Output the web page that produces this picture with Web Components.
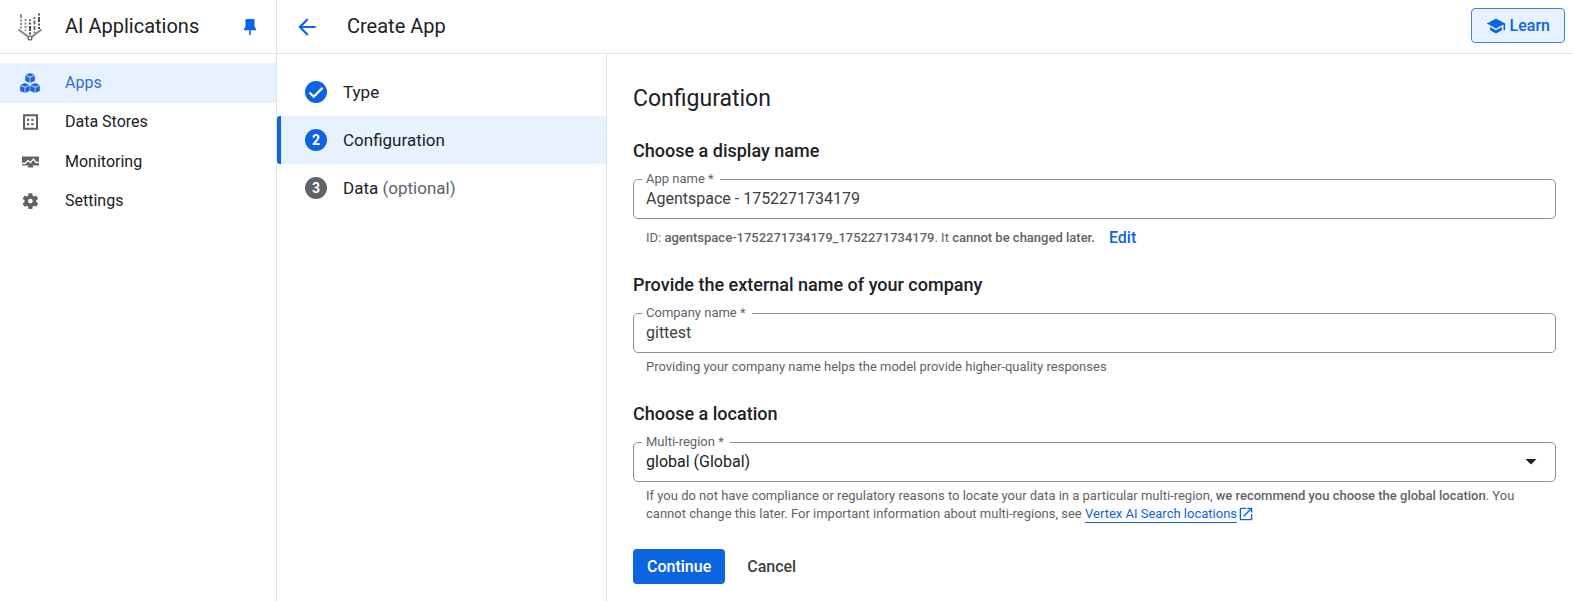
<!DOCTYPE html>
<html lang="en">
<head>
<meta charset="utf-8">
<title>Create App – AI Applications</title>
<style>
  :root {
    --blue: #0b65e3;
    --blue-tint: #e8f1fe;
    --ink: #202124;
    --ink-soft: #3c4043;
    --grey: #5f6368;
    --rule: #dfe1e5;
    --outline: #8a9096;
  }
  body { margin: 0; font: 16px/24px Roboto, sans-serif; color: var(--ink); background: #fff; }
</style>
</head>
<body>
<app-shell>
  <product-bar slot="brand">AI Applications</product-bar>
  <side-nav slot="nav">
    <nav-item icon="apps" active>Apps</nav-item>
    <nav-item icon="data">Data Stores</nav-item>
    <nav-item icon="monitor">Monitoring</nav-item>
    <nav-item icon="settings">Settings</nav-item>
  </side-nav>
  <page-bar slot="bar">Create App</page-bar>
  <step-list slot="steps">
    <step-item state="done">Type</step-item>
    <step-item state="current" number="2">Configuration</step-item>
    <step-item number="3" note="(optional)">Data</step-item>
  </step-list>
  <config-form></config-form>
</app-shell>

<script>
const CUBE = `<path d="M10 .3l4 1.600L10 3.600 6 1.900z"/><path d="M5.400 3l4 1.700v4.700L5.400 7.700zM14.600 3l-4 1.700v4.700l4-1.700z"/>`;
const ICONS = {
  logo: `<svg width="26" height="30" viewBox="0 0 26 30" fill="none">
    <g stroke="#80868b" stroke-width="1.8">
      <path d="M4 2v4" /><path d="M4 7.500v2M4 11v2M4 14.500v2"/>
      <path d="M8.500 7v2M8.500 10.500v2M8.500 14v2M8.500 17.500v1.500"/>
      <path d="M17.500 5v2M17.500 8.500v4M17.500 14v4M17.500 19.500v1.500" stroke="#5f6368"/>
    </g>
    <g stroke="#4d5156" stroke-width="2"><path d="M13 7.500v1.500M13 10.500v2M13 14v5M13 20.500v2"/><path d="M22 1.500v2M22 5v5M22 11.500v2M22 15v2"/></g>
    <path d="M1.500 17.500l10 7.500M24.500 17.500l-10 7.500" stroke="#80868b" stroke-width="2"/>
    <circle cx="13" cy="26" r="1.900" stroke="#5f6368" stroke-width="1.300" fill="#fff"/></svg>`,
  pin: `<svg width="14" height="18" viewBox="0 0 14 18" fill="currentColor"><path d="M3.300 1h7.400a.8.8 0 0 1 .8.8V8.500l1.500 2.500v1.300H7.800V17H6.200v-4.700H1V11l1.500-2.500V1.800a.8.8 0 0 1 .8-.8z"/></svg>`,
  apps: `<svg width="20" height="20" viewBox="0 0 20 20" fill="#1b66d8" stroke="#1b66d8" stroke-width=".5" stroke-linejoin="round">
    <g>${CUBE}</g><g transform="translate(-5.100 10)">${CUBE}</g><g transform="translate(5.100 10)">${CUBE}</g></svg>`,
  data: `<svg width="20" height="20" viewBox="0 0 20 20"><path d="M4 3.200h13v13.600H4z" fill="none" stroke="#5f6368" stroke-width="2"/><path d="M7 6.800h2.200V9H7zM11.300 6.800h2.200V9h-2.200zM7 11h2.200v2.200H7zM11.300 11h2.200v2.200h-2.200z" fill="#5f6368"/></svg>`,
  monitor: `<svg width="20" height="20" viewBox="0 0 20 20"><path d="M2 4.500h17v9h-6.500l1 2h-6l1-2H2z" fill="#5f6368"/><path d="M2 11.500h3l3-3 2.500 2 3-3.500 2.500 3.500h3" fill="none" stroke="#fff" stroke-width="1.300"/></svg>`,
  settings: `<svg width="20" height="20" viewBox="1.500 2 21 20" fill="#5f6368"><path d="M19.140 12.940c.04-.3.060-.61.060-.94 0-.32-.02-.64-.07-.94l2.030-1.580c.18-.14.23-.41.12-.61l-1.920-3.320c-.12-.22-.37-.29-.59-.22l-2.390.96c-.5-.38-1.030-.7-1.620-.94l-.36-2.540c-.04-.24-.24-.41-.48-.41h-3.840c-.24 0-.43.17-.47.41l-.36 2.540c-.59.24-1.130.57-1.620.94l-2.390-.96c-.22-.08-.47 0-.59.22L2.740 8.870c-.12.21-.08.47.12.61l2.030 1.580c-.05.3-.09.63-.09.94s.02.64.07.94l-2.030 1.580c-.18.14-.23.41-.12.61l1.920 3.320c.12.22.37.29.59.22l2.390-.96c.5.38 1.030.7 1.620.94l.36 2.540c.05.24.24.41.48.41h3.840c.24 0 .44-.17.47-.41l.36-2.540c.59-.24 1.130-.56 1.620-.94l2.390.96c.22.08.47 0 .59-.22l1.920-3.320c.12-.22.070-.47-.12-.61l-2.010-1.580zM12 14.800a2.800 2.800 0 1 1 0-5.600 2.800 2.800 0 0 1 0 5.600z" transform="translate(2.100 1.800) scale(.86)"/></svg>`,
  back: `<svg width="26" height="26" viewBox="0 0 24 24" fill="currentColor"><path d="M20 11H7.830l5.590-5.590L12 4l-8 8 8 8 1.410-1.410L7.830 13H20v-2z"/></svg>`,
  school: `<svg width="20" height="20" viewBox="0 0 24 24" fill="currentColor"><path d="M5 13.180v4L12 21l7-3.820v-4L12 17l-7-3.820zM12 3L1 9l11 6 9-4.910V17h2V9L12 3z"/></svg>`,
  check: `<svg width="22" height="22" viewBox="0 0 22 22" fill="none"><path d="M4.500 11.500l4.200 4.200 8.800-8.800" stroke="#fff" stroke-width="2.200"/></svg>`,
  caret: `<svg width="12" height="6" viewBox="0 0 12 6"><path d="M0.500 0h11L6 5.600z" fill="#202124"/></svg>`,
  external: `<svg width="14" height="14" viewBox="2 2 20 20" fill="currentColor"><path d="M19 19H5V5h7V3H5a2 2 0 0 0-2 2v14a2 2 0 0 0 2 2h14c1.100 0 2-.9 2-2v-7h-2v7zM14 3v2h3.590l-9.830 9.830 1.410 1.410L19 6.410V10h2V3h-7z"/></svg>`
};

/* Base class: renders css() and html() into an open shadow root. */
class View extends HTMLElement {
  connectedCallback() {
    if (this.shadowRoot) return;
    this.attachShadow({ mode: 'open' }).innerHTML =
      `<style>*{box-sizing:border-box} svg{display:block;flex:none} ${this.css()}</style>${this.html()}`;
  }
}

customElements.define('app-shell', class extends View {
  css() { return `
    :host { display: grid; grid-template-columns: 277px 1fr; min-height: 100vh; }
    .side { border-right: 1px solid var(--rule); }
    .page { display: flex; flex-direction: column; min-width: 0; }
    .body { flex: 1; display: grid; grid-template-columns: 330px 1fr; }
    .steps { border-right: 1px solid var(--rule); }
    main { min-width: 0; }`; }
  html() { return `
    <aside class="side"><slot name="brand"></slot><slot name="nav"></slot></aside>
    <div class="page"><slot name="bar"></slot>
      <div class="body"><div class="steps"><slot name="steps"></slot></div><main><slot></slot></main></div>
    </div>`; }
});

customElements.define('product-bar', class extends View {
  css() { return `
    :host { display: flex; align-items: center; height: 54px; padding: 0 19px 0 17px; border-bottom: 1px solid var(--rule); box-sizing: border-box; }
    .name { flex: 1; margin: 0 0 2px 22px; font-size: 20px; }
    button { border: 0; padding: 0; background: none; color: var(--blue); }`; }
  html() { return `${ICONS.logo}<span class="name"><slot></slot></span><button aria-label="Unpin menu">${ICONS.pin}</button>`; }
});

customElements.define('side-nav', class extends View {
  css() { return `
    :host { display: block; padding-top: 9px; }
    nav { display: grid; grid-auto-rows: 1fr; height: 158px; }`; }
  html() { return `<nav><slot></slot></nav>`; }
});

customElements.define('nav-item', class extends View {
  css() { return `
    :host { display: grid; }
    :host([active]) { background: var(--blue-tint); }
    a { display: flex; align-items: center; gap: 25px; padding-left: 20px; color: var(--ink); text-decoration: none; }
    :host([active]) a { color: #2a6edb; }`; }
  html() { return `<a href="#">${ICONS[this.getAttribute('icon')]}<span><slot></slot></span></a>`; }
});

customElements.define('page-bar', class extends View {
  css() { return `
    :host { display: flex; align-items: center; height: 54px; padding: 0 8px 0 17px; border-bottom: 1px solid var(--rule); box-sizing: border-box; }
    h1 { flex: 1; margin: 0 0 2px 27px; font-size: 20px; font-weight: 400; }
    button { font: inherit; color: var(--blue); background: none; border: 0; padding: 0; }
    .learn { display: flex; align-items: center; gap: 4px; height: 35px; padding: 0 14px; margin-bottom: 2px; border: 1px solid #3b82ea; border-radius: 4px; background: var(--blue-tint); font-weight: 500; }`; }
  html() { return `<button aria-label="Back">${ICONS.back}</button><h1><slot></slot></h1><button class="learn">${ICONS.school}<span>Learn</span></button>`; }
});

customElements.define('step-list', class extends View {
  css() { return `:host { display: block; padding-top: 14px; }`; }
  html() { return `<slot></slot>`; }
});

customElements.define('step-item', class extends View {
  css() { return `
    :host { display: flex; align-items: center; gap: 16px; height: 48px; padding-left: 24px; border-left: 4px solid transparent; font-size: 17px; box-sizing: border-box; }
    :host([state=current]) { border-color: var(--blue); border-radius: 3px 0 0 3px; background: var(--blue-tint); }
    .dot { display: grid; place-items: center; width: 22px; height: 22px; border-radius: 50%; background: var(--grey); color: #fff; font-size: 14px; font-weight: 700; line-height: 22px; }
    :host([state]) .dot { background: var(--blue); }
    .note { color: var(--grey); }`; }
  html() {
    const note = this.getAttribute('note');
    return `<span class="dot">${this.getAttribute('number') || ICONS.check}</span>
      <span><slot></slot>${note ? ` <span class="note">${note}</span>` : ''}</span>`;
  }
});

/* Outlined field with its label set in the notch of the border. */
customElements.define('outlined-field', class extends View {
  css() { return `
    :host { display: block; }
    fieldset { height: 48px; margin: 0; padding: 0; border: 1px solid var(--outline); border-radius: 5px; min-width: 0; }
    legend { display: block; margin-left: 8px; padding: 0 6px 0 4px; height: 16px; font-size: 13px; line-height: 16px; color: var(--grey); }
    .box { display: grid; align-items: center; height: 24px; }
    .box > * { grid-area: 1 / 1; }
    input, select { appearance: none; width: 100%; height: 24px; padding: 0 12px; border: 0; outline: 0; background: none; font: inherit; color: var(--ink-soft); }
    select { color: var(--ink); }
    svg { justify-self: end; margin-right: 18px; pointer-events: none; }`; }
  html() {
    const value = this.getAttribute('value');
    const control = this.hasAttribute('menu')
      ? `<select id="f"><option>${value}</option></select>${ICONS.caret}`
      : `<input id="f" type="text" value="${value}">`;
    return `<fieldset><legend><label for="f">${this.getAttribute('label')} *</label></legend><div class="box">${control}</div></fieldset>`;
  }
});

customElements.define('form-section', class extends View {
  css() { return `
    :host { display: block; }
    h3 { margin: 0 0 8px; font-size: 18px; font-weight: 500; line-height: 24px; }
    .hint { padding: 0 13px; margin-top: 5px; font-size: 13px; line-height: 18px; color: var(--grey); }
    :host([roomy]) .hint { margin-top: 10px; }`; }
  html() { return `<h3>${this.getAttribute('heading')}</h3><slot name="field"></slot><div class="hint"><slot></slot></div>`; }
});

customElements.define('config-form', class extends View {
  css() { return `
    :host { display: block; padding: 31px 17px 16px 26px; }
    h2 { margin: 0 0 26px; font-size: 23px; font-weight: 400; line-height: 28px; }
    form { display: grid; gap: 26px; }
    b { font-weight: 500; }
    .id { display: flex; align-items: center; gap: 14px; height: 18px; }
    a { color: var(--blue); text-decoration: none; }
    .edit { font-size: 16px; font-weight: 500; }
    .doc { display: inline-flex; align-items: center; gap: 2px; height: 18px; vertical-align: top; }
    .doc span { border-bottom: 1px solid; line-height: 17px; }
    .actions { display: flex; gap: 9px; }
    button { height: 35px; padding: 0 13px; border: 0; border-radius: 4px; background: none; font: 500 16px/24px Roboto, sans-serif; color: var(--ink-soft); }
    .primary { background: var(--blue); color: #fff; padding: 0 14px; }`; }
  html() { return `
    <h2>Configuration</h2>
    <form>
      <form-section heading="Choose a display name" roomy>
        <outlined-field slot="field" label="App name" value="Agentspace - 1752271734179"></outlined-field>
        <div class="id"><span>ID: <b>agentspace-1752271734179_1752271734179</b>. It <b>cannot be changed later.</b></span><a class="edit" href="#">Edit</a></div>
      </form-section>
      <form-section heading="Provide the external name of your company">
        <outlined-field slot="field" label="Company name" value="gittest"></outlined-field>
        Providing your company name helps the model provide higher-quality responses
      </form-section>
      <form-section heading="Choose a location">
        <outlined-field slot="field" label="Multi-region" value="global (Global)" menu></outlined-field>
        If you do not have compliance or regulatory reasons to locate your data in a particular multi-region, <b>we recommend you choose the global location</b><span>. You</span> <span>cannot change this later. For important information about multi-regions, see</span> <a class="doc" href="#"><span>Vertex AI Search locations</span>${ICONS.external}</a>
      </form-section>
      <div class="actions"><button class="primary" type="button">Continue</button><button type="button">Cancel</button></div>
    </form>`; }
});
</script>
</body>
</html>
